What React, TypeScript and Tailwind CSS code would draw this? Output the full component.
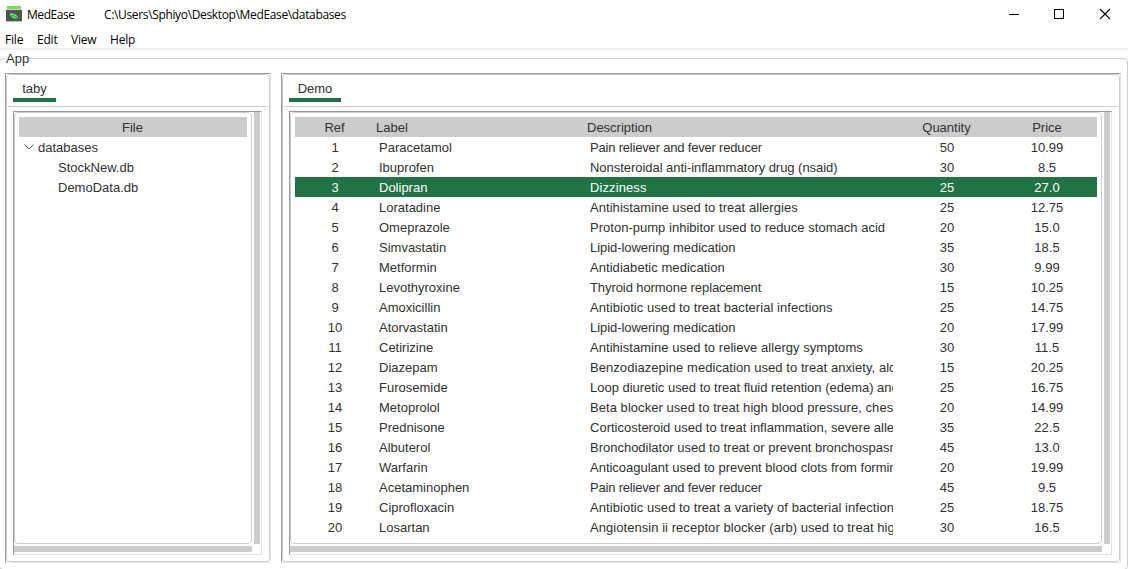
import { ReactNode } from "react";

type Row = [string, string, string, string, string, string];

const rows: Row[] = [
  ["1", "Paracetamol", "Pain reliever and fever reducer", "50", "10.99", "tracking-[-0.19px]"],
  ["2", "Ibuprofen", "Nonsteroidal anti-inflammatory drug (nsaid)", "30", "8.5", "tracking-[-0.04px]"],
  ["3", "Dolipran", "Dizziness", "25", "27.0", "tracking-[0.1px]"],
  ["4", "Loratadine", "Antihistamine used to treat allergies", "25", "12.75", "tracking-[0.05px]"],
  ["5", "Omeprazole", "Proton-pump inhibitor used to reduce stomach acid", "20", "15.0", "tracking-[0.02px]"],
  ["6", "Simvastatin", "Lipid-lowering medication", "35", "18.5", "tracking-[-0.05px]"],
  ["7", "Metformin", "Antidiabetic medication", "30", "9.99", "tracking-[0.05px]"],
  ["8", "Levothyroxine", "Thyroid hormone replacement", "15", "10.25", "tracking-[-0.08px]"],
  ["9", "Amoxicillin", "Antibiotic used to treat bacterial infections", "25", "14.75", "tracking-[0.06px]"],
  ["10", "Atorvastatin", "Lipid-lowering medication", "20", "17.99", "tracking-[-0.05px]"],
  ["11", "Cetirizine", "Antihistamine used to relieve allergy symptoms", "30", "11.5", "tracking-[0.04px]"],
  ["12", "Diazepam", "Benzodiazepine medication used to treat anxiety, alcohol", "15", "20.25", "tracking-[0.06px]"],
  ["13", "Furosemide", "Loop diuretic used to treat fluid retention (edema) and", "25", "16.75", "tracking-[-0.01px]"],
  ["14", "Metoprolol", "Beta blocker used to treat high blood pressure, chest", "20", "14.99", "tracking-[0.05px]"],
  ["15", "Prednisone", "Corticosteroid used to treat inflammation, severe allergies", "35", "22.5", "tracking-[0.01px]"],
  ["16", "Albuterol", "Bronchodilator used to treat or prevent bronchospasm", "45", "13.0", "tracking-[-0.01px]"],
  ["17", "Warfarin", "Anticoagulant used to prevent blood clots from forming", "20", "19.99", "tracking-[-0.01px]"],
  ["18", "Acetaminophen", "Pain reliever and fever reducer", "45", "9.5", "tracking-[-0.19px]"],
  ["19", "Ciprofloxacin", "Antibiotic used to treat a variety of bacterial infections", "25", "18.75", "tracking-[0.06px]"],
  ["20", "Losartan", "Angiotensin ii receptor blocker (arb) used to treat high", "30", "16.5", "tracking-[0.05px]"],
];

const columns = "grid grid-cols-[80px_211px_311px_100px_100px] h-5 leading-[21px]";

function AppIcon() {
  return (
    <svg width="18" height="20" viewBox="0 0 18 20" shapeRendering="crispEdges">
      <rect x="1" y="0" width="14" height="3" fill="#7ed957" />
      <rect x="0" y="4" width="16" height="12" fill="#545454" />
      <rect x="0" y="3" width="16" height="1" fill="#d4d4d4" />
      <rect x="0" y="15" width="16" height="1" fill="#bdbdbd" />
      <path d="M4 7h4v1h2v1h1v1h1v2h-1v1H8v-1H6v-1H5v-1H4z" fill="#3fc55c" />
      <path d="M5 8h2v1H5zM8 9h2v1H8zM7 11h2v1H7z" fill="#8be05f" />
      <path d="M6 9h2v1H6zM9 11h2v1H9z" fill="#1da587" />
    </svg>
  );
}

function TitleBar() {
  return (
    <header className="flex h-[29px] shrink-0 items-start pl-[6px] text-black">
      <div className="mt-[6px] w-[21px]">
        <AppIcon />
      </div>
      <div className="mt-[6px] w-[77px] text-[12px] leading-[18px] tracking-[-0.45px]">MedEase</div>
      <div className="mt-[6px] flex-1 text-[12px] leading-[18px] tracking-[-0.35px]">
        C:\Users\Sphiyo\Desktop\MedEase\databases
      </div>
      <svg className="mt-[8px] mr-[17px]" width="102" height="12" viewBox="0 0 102 12" fill="none" stroke="#000">
        <path d="M0 6.5h10M45.5 1.5h9v9h-9z" shapeRendering="crispEdges" />
        <path d="M91 1l10 10M101 1L91 11" strokeWidth="1.1" />
      </svg>
    </header>
  );
}

function MenuBar() {
  return (
    <nav className="flex h-[21px] shrink-0 border-b-2 border-[#f0f0f0] pl-[5px] text-[12px] leading-[21px] tracking-[-0.2px] text-black">
      <span className="w-8">File</span>
      <span className="w-[34px]">Edit</span>
      <span className="w-[39px]">View</span>
      <span>Help</span>
    </nav>
  );
}

const sunken = "border border-t-[#999] border-l-[#999] border-r-[#e4e4e4] border-b-[#e4e4e4]";

function Pane({ title, tab, width, children }: { title: string; tab: string; width: string; children: ReactNode }) {
  return (
    <section className={`${sunken} ${width} h-[490px] shrink-0`}>
      <div className="flex h-full flex-col rounded-[4px] border border-[#ccc] px-px">
        <div className="h-[32px] shrink-0 border-b border-[#ccc] pl-[5px]">
          <div className={`${tab} h-[27px] border-b-4 border-[#217346] text-center leading-[27px]`}>{title}</div>
        </div>
        <div className="flex-1 pt-[4px] pr-[6px] pl-[5px]">
          <div className={`${sunken} flex h-[444px] flex-col`}>
            <div className="flex h-[432px]">
              <div className="flex-1 rounded-[4px] border border-[#ccc] pt-[4px] pr-[4px] pl-[4px]">{children}</div>
              <div className="mr-px ml-[2px] w-[6px] bg-[#ccc]" />
            </div>
            <div className="mt-[2px] mr-[9px] h-[6px] bg-[#ccc]" />
          </div>
        </div>
      </div>
    </section>
  );
}

function FileTree() {
  return (
    <div className="leading-[21px]">
      <div className="h-5 bg-[#ccc] pr-px text-center">File</div>
      <div className="flex h-5 pl-[5px]">
        <svg className="mt-[7px]" width="10" height="6" viewBox="0 0 10 6" fill="none" stroke="#555">
          <path d="M0.5 0.5L5 5L9.5 0.5" />
        </svg>
        <span className="pl-[4px]">databases</span>
      </div>
      <div className="h-5 pl-[39px]">StockNew.db</div>
      <div className="h-5 pl-[39px]">DemoData.db</div>
    </div>
  );
}

function ProductTable() {
  return (
    <div>
      <div className={`${columns} bg-[#ccc]`}>
        <span className="pr-px text-center">Ref</span>
        <span className="pl-px">Label</span>
        <span className="pl-px">Description</span>
        <span className="pr-px text-center">Quantity</span>
        <span className="text-center">Price</span>
      </div>
      {rows.map(([ref, label, description, quantity, price, tracking]) => (
        <div key={ref} className={`${columns} ${ref === "3" ? "bg-[#217346] text-white" : ""}`}>
          <span className="text-center">{ref}</span>
          <span className="pl-[4px]">{label}</span>
          <span className={`mr-[4px] ml-[4px] overflow-hidden whitespace-nowrap ${tracking}`}>{description}</span>
          <span className="text-center">{quantity}</span>
          <span className="text-center">{price}</span>
        </div>
      ))}
    </div>
  );
}

export default function App() {
  return (
    <div className="flex h-[569px] w-[1128px] flex-col overflow-hidden bg-white font-['Open_Sans',sans-serif]">
      <TitleBar />
      <MenuBar />
      <fieldset className="mx-0 -ml-px h-[520px] w-[1129px] shrink-0 rounded-[4px] border border-[#ccc] font-['Liberation_Sans',sans-serif] text-[13px] text-[#313131]">
        <legend className="ml-[5px] h-[17px] pl-px leading-[17px]">App</legend>
        <div className="flex gap-[10px] pt-[6px] pl-[5px]">
          <Pane title="taby" tab="w-[43px]" width="w-[266px]">
            <FileTree />
          </Pane>
          <Pane title="Demo" tab="w-[52px]" width="w-[840px]">
            <ProductTable />
          </Pane>
        </div>
      </fieldset>
    </div>
  );
}
